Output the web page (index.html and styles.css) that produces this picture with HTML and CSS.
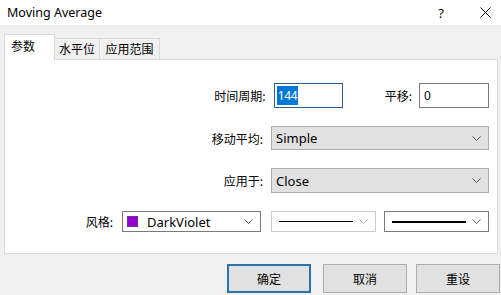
FILE: index.html
```html
<!DOCTYPE html>
<html>
<head>
<meta charset="utf-8">
<link rel="stylesheet" href="styles.css">
</head>
<body>
<div class="window">
  <div class="titlebar">
    <span class="title">Moving Average</span>
    <span class="help">?</span>
    <svg class="close" width="11" height="11" viewBox="0 0 11 11"><path d="M0.5 0.5L10.5 10.5M10.5 0.5L0.5 10.5" stroke="#000" stroke-width="1" fill="none"/></svg>
  </div>
  <div class="body">
    <div class="tabs">
      <div class="tab active">参数</div>
      <div class="tab">水平位</div>
      <div class="tab">应用范围</div>
    </div>
    <div class="panel">
      <div class="row row1">
        <label class="lbl">时间周期:</label>
        <div class="input focus"><span class="sel">144</span></div>
        <label class="lbl shift">平移:</label>
        <div class="input small">0</div>
      </div>
      <div class="row row2">
        <label class="lbl">移动平均:</label>
        <div class="select wide">Simple<svg class="chev" width="9" height="5" viewBox="0 0 9 5"><path d="M0.5 0.5L4.5 4.5L8.5 0.5" stroke="#555" fill="none"/></svg></div>
      </div>
      <div class="row row3">
        <label class="lbl">应用于:</label>
        <div class="select wide tall">Close<svg class="chev" width="9" height="5" viewBox="0 0 9 5"><path d="M0.5 0.5L4.5 4.5L8.5 0.5" stroke="#555" fill="none"/></svg></div>
      </div>
      <div class="row row4">
        <label class="lbl">风格:</label>
        <div class="combo color"><span class="swatch"></span><span class="cname">DarkViolet</span><svg class="chev" width="9" height="5" viewBox="0 0 9 5"><path d="M0.5 0.5L4.5 4.5L8.5 0.5" stroke="#555" fill="none"/></svg></div>
        <div class="combo line disabled"><span class="stroke thin"></span><svg class="chev" width="9" height="5" viewBox="0 0 9 5"><path d="M0.5 0.5L4.5 4.5L8.5 0.5" stroke="#bbb" fill="none"/></svg></div>
        <div class="combo line"><span class="stroke thick"></span><svg class="chev" width="9" height="5" viewBox="0 0 9 5"><path d="M0.5 0.5L4.5 4.5L8.5 0.5" stroke="#555" fill="none"/></svg></div>
      </div>
    </div>
    <div class="buttons">
      <div class="btn default">确定</div>
      <div class="btn">取消</div>
      <div class="btn">重设</div>
    </div>
  </div>
</div>
</body>
</html>
```
FILE: styles.css
```css
* { box-sizing: border-box; }
html, body { margin: 0; padding: 0; }
body {
  width: 501px;
  height: 295px;
  overflow: hidden;
  background: #f0f0f0;
  font-family: "Noto Sans", "Noto Sans CJK SC", sans-serif;
  font-size: 12px;
  color: #000;
}
.window { width: 501px; height: 295px; display: flex; flex-direction: column; }
.titlebar {
  height: 25px;
  background: #fff;
  display: flex;
  align-items: center;
  padding-left: 7px;
  flex: none;
}
.title { font-size: 12.5px; flex: 1; }
.help { font-size: 13px; margin-right: 36px; }
.close { margin-right: 10px; }
.body { flex: 1; display: flex; flex-direction: column; padding-left: 4px; padding-right: 3px; }
.tabs { display: flex; align-items: flex-end; height: 34px; padding-top: 9px; position: relative; z-index: 1; }
.tab {
  height: 21px;
  padding: 0;
  border: 1px solid #d9d9d9;
  border-bottom: none;
  background: #f0f0f0;
  font-family: "Noto Sans CJK SC", sans-serif;
  font-size: 12px;
  line-height: 20px;
  margin-left: -1px;
  white-space: nowrap;
  text-align: center;
}
.tab:first-child { margin-left: 0; }
.tab.active {
  width: 51px;
  background: #fff;
  padding-left: 6px;
  text-align: left;
  line-height: 22px;
  margin-bottom: -1px;
  height: 26px;
}
.tab:nth-child(2) { width: 46px; }
.tab:nth-child(3) { width: 61px; }
.panel {
  height: 195px;
  background: #fff;
  border: 1px solid #d9d9d9;
  padding: 23px 8px 0 0;
  display: flex;
  flex-direction: column;
  gap: 18px;
}
.row { display: flex; align-items: center; justify-content: flex-end; }
.lbl { font-family: "Noto Sans CJK SC", sans-serif; font-size: 12px; color: #000; }
.row1 { height: 25px; }
.row1 .lbl:first-child { margin-right: 8px; }
.input {
  height: 25px;
  border: 1px solid #7a7a7a;
  background: #fff;
  width: 69px;
  padding: 0 0 0 2px;
  display: flex;
  align-items: center;
  font-size: 12px;
}
.input.focus { border-color: #2b5d8f; }
.input.small { width: 70px; padding-left: 4px; }
.sel { background: #0078d7; color: #fff; height: 19px; line-height: 19px; padding: 0 1px; letter-spacing: -0.3px; }
.shift { margin-left: 42px; margin-right: 7px; }
.row2, .row3 { height: 24px; }
.row3 { height: 25px; }
.row2 .lbl, .row3 .lbl { margin-right: 8px; }
.select {
  width: 218px;
  height: 24px;
  background: #e1e1e1;
  border: 1px solid #adadad;
  display: flex;
  align-items: center;
  padding-left: 4px;
  padding-right: 7px;
  justify-content: space-between;
  font-size: 13px;
}
.select.tall { height: 25px; }
.row4 { height: 21px; gap: 0; }
.row4 .lbl { margin-right: 9px; }
.combo {
  height: 21px;
  border: 1px solid #7a7a7a;
  background: #fff;
  display: flex;
  align-items: center;
  padding-right: 7px;
}
.combo.color { width: 139px; padding-left: 4px; }
.swatch { width: 11px; height: 11px; background: #9400d3; border: 1px solid #7a2a9a; flex: none; }
.cname { flex: 1; margin-left: 9px; font-size: 13px; }
.combo.line { width: 105px; padding-left: 7px; justify-content: space-between; margin-left: 8px; }
.combo.line.disabled { border-color: #cccccc; margin-left: 10px; }
.stroke { display: block; width: 74px; background: #000; }
.stroke.thin { height: 1px; }
.stroke.thick { height: 2px; }
.buttons { display: flex; justify-content: flex-end; gap: 12px; margin-top: 10px; margin-right: -2px; }
.btn {
  width: 84px;
  height: 29px;
  background: #e1e1e1;
  border: 1px solid #adadad;
  display: flex;
  align-items: center;
  justify-content: center;
  font-family: "Noto Sans CJK SC", sans-serif;
  font-size: 12px;
}
.btn:nth-child(2) { margin-right: -3px; }
.btn.default { border: 2px solid #2e72ad; }
```
